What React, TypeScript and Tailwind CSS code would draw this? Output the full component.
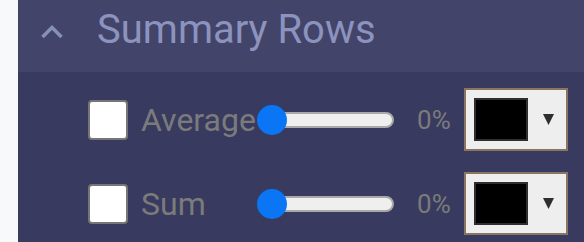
import React from "react";

type SummaryRow = {
  label: string;
  percent: number;
};

const rows: SummaryRow[] = [
  { label: "Average", percent: 0 },
  { label: "Sum", percent: 0 },
];

const ColorSelect = () => (
  <div className="w-[104px] h-[63px] border-2 border-[#8a7561] bg-[#eeeeee] flex items-center shrink-0">
    <div className="ml-[8px] w-[54px] h-[43px] border-2 border-[#2e2e2e] bg-black" />
    <svg className="ml-[15px]" width="11" height="11" viewBox="0 0 11 11">
      <polygon points="0,0 11,0 5.5,11" fill="#2e2e2e" />
    </svg>
  </div>
);

const Slider = ({ value }: { value: number }) => (
  <div className="relative w-[137px] h-[30px] flex items-center shrink-0">
    <div className="absolute left-[8px] right-0 top-[7px] h-[16px] rounded-full bg-[#efefef] border-2 border-[#a9a9a9]" />
    <div
      className="relative w-[30px] h-[30px] rounded-full bg-[#0a76f6]"
      style={{ marginLeft: `${(value / 100) * 107}px` }}
    />
  </div>
);

const Row = ({ row }: { row: SummaryRow }) => (
  <div className="flex items-center h-[63px]">
    <div className="ml-[70px] w-[40px] h-[40px] bg-white border-2 border-[#767676] rounded-[4px] shrink-0" />
    <span className="ml-[13px] w-[116px] shrink-0 text-[32px] leading-none text-[#7b7b7b] whitespace-nowrap">
      {row.label}
    </span>
    <Slider value={row.percent} />
    <span className="ml-[23px] w-[47px] shrink-0 text-[26px] leading-none text-[#7b7b7b]">
      {row.percent}%
    </span>
    <ColorSelect />
  </div>
);

export default function App() {
  return (
    <div className="w-[584px] h-[242px] flex overflow-hidden font-['Roboto',sans-serif]">
      <div className="w-[18px] bg-[#f8f9fb]" />
      <div className="flex-1 flex flex-col bg-[#393a5f]">
        <div className="h-[72px] bg-[#434469] flex items-center">
          <svg
            className="ml-[22px] mb-[10px]"
            width="24"
            height="15"
            viewBox="0 0 24 15"
            fill="none"
            stroke="#8790b7"
            strokeWidth="3.5"
          >
            <path d="M2.5 13 L12 3.5 L21.5 13" />
          </svg>
          <span className="ml-[33px] mb-[12px] text-[40px] leading-none text-[#8b93be]">
            Summary Rows
          </span>
        </div>
        <div className="flex flex-col gap-[21px] pt-[16px]">
          {rows.map((row) => (
            <Row key={row.label} row={row} />
          ))}
        </div>
      </div>
    </div>
  );
}
